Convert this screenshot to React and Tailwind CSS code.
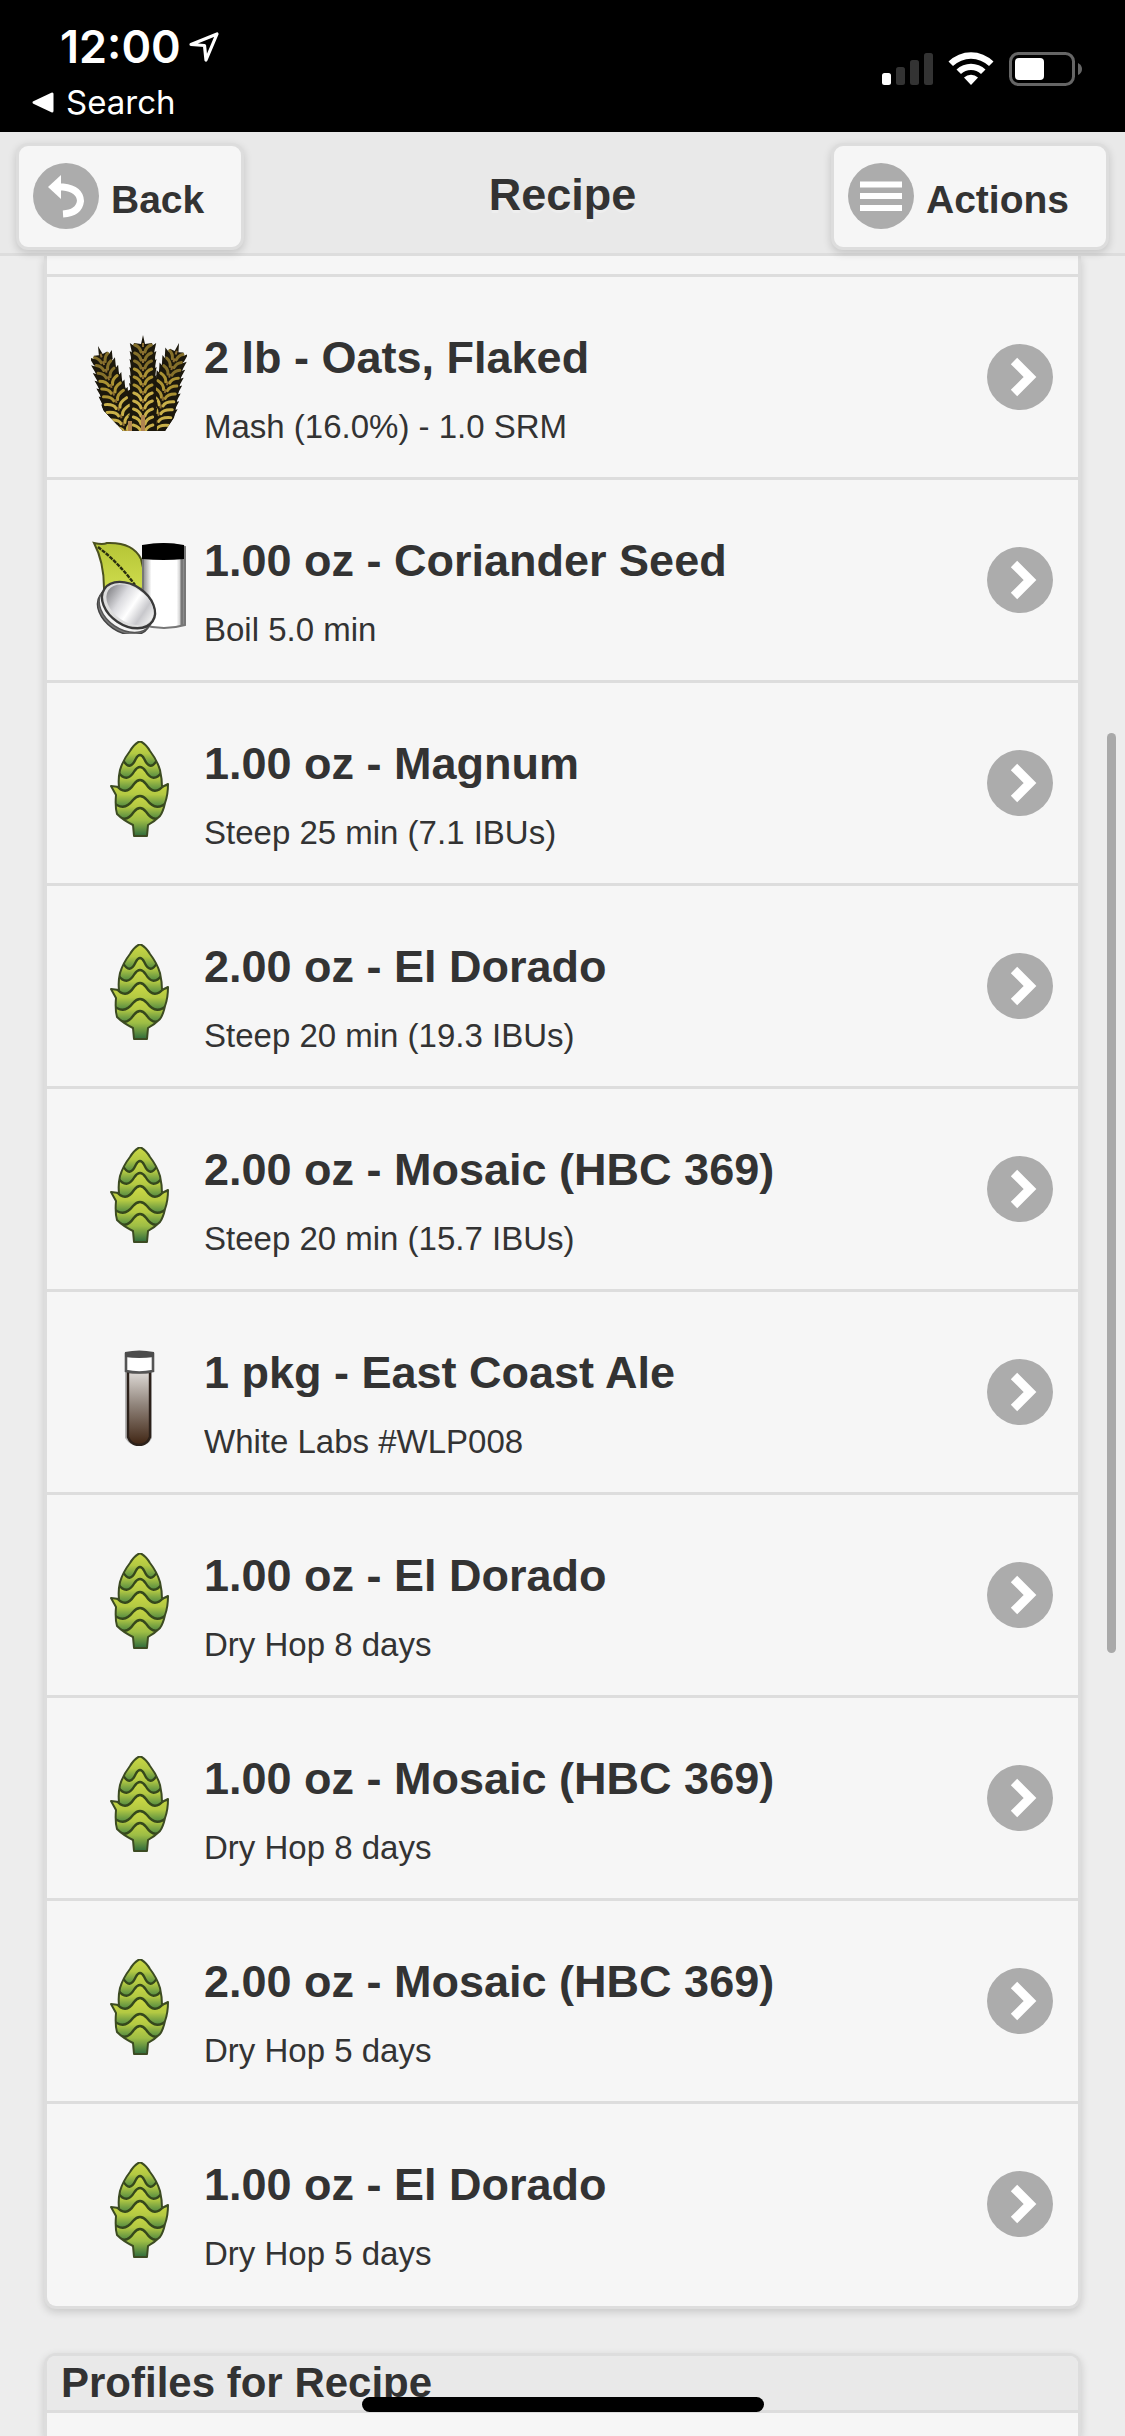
import React from "react";

const ingredients = [
  { icon: "grain", title: "2 lb - Oats, Flaked", detail: "Mash (16.0%) - 1.0 SRM" },
  { icon: "spice", title: "1.00 oz - Coriander Seed", detail: "Boil 5.0 min" },
  { icon: "hop", title: "1.00 oz - Magnum", detail: "Steep 25 min (7.1 IBUs)" },
  { icon: "hop", title: "2.00 oz - El Dorado", detail: "Steep 20 min (19.3 IBUs)" },
  { icon: "hop", title: "2.00 oz - Mosaic (HBC 369)", detail: "Steep 20 min (15.7 IBUs)" },
  { icon: "yeast", title: "1 pkg - East Coast Ale", detail: "White Labs #WLP008" },
  { icon: "hop", title: "1.00 oz - El Dorado", detail: "Dry Hop 8 days" },
  { icon: "hop", title: "1.00 oz - Mosaic (HBC 369)", detail: "Dry Hop 8 days" },
  { icon: "hop", title: "2.00 oz - Mosaic (HBC 369)", detail: "Dry Hop 5 days" },
  { icon: "hop", title: "1.00 oz - El Dorado", detail: "Dry Hop 5 days" },
];

function Ear({ x, y, angle, length, width, spread }) {
  const rows = [];
  for (let d = 10; d < length; d += 8) rows.push({ d, w: width + d * spread });
  const end = width + length * spread;
  return (
    <g transform={`translate(${x} ${y}) rotate(${angle})`}>
      <path d={`M0 0L2 9L${width - 3} 8L${width} 20L${end} ${length}H${-end}L${-width} 20L${-width + 3} 8L-2 9Z`} fill="#1c180c" />
      {rows.map(({ d, w }) => (
        <g key={d}>
          <path d={`M0 ${d + 7}L${-w - 1} ${d - 2}L${-w + 1} ${d + 7}ZM0 ${d + 7}L${w + 1} ${d - 2}L${w - 1} ${d + 7}Z`} fill="#1c180c" />
          <path
            d={`M-2 ${d + 7}Q-3 ${d + 2} ${-w + 4} ${d}M2 ${d + 7}Q3 ${d + 2} ${w - 4} ${d}`}
            stroke={d < 28 ? "#85702a" : d < 58 ? "#ab9233" : "#c9b049"}
            strokeWidth="3"
            strokeLinecap="round"
            fill="none"
          />
          <path d={`M0 ${d - 2}V${d + 2}`} stroke="#8d6f33" strokeWidth="2" />
        </g>
      ))}
    </g>
  );
}

function GrainIcon() {
  return (
    <svg viewBox="0 0 96 96" className="size-24" aria-hidden="true">
      <clipPath id="grain-base">
        <path d="M0 0H96V50L90 66L86 78L74 96H32L12 75L4 50L0 30Z" />
      </clipPath>
      <g clipPath="url(#grain-base)">
        <path d="M20 66L40 54L64 54L84 66L74 96H32Z" fill="#1c180c" />
        <Ear x={7} y={11} angle={-18} length={96} width={10} spread={0.09} />
        <Ear x={88} y={8} angle={16} length={98} width={10} spread={0.09} />
        <Ear x={52} y={0} angle={0} length={96} width={12} spread={0.02} />
        <path d="M52 80V96M39 86V96" stroke="#b08450" strokeWidth="4" />
      </g>
    </svg>
  );
}

function SpiceIcon() {
  return (
    <svg viewBox="0 0 96 96" className="size-24" aria-hidden="true">
      <defs>
        <linearGradient id="jar-glass">
          <stop offset="0" stopColor="#8a8a8a" />
          <stop offset=".2" stopColor="#fff" />
          <stop offset=".8" stopColor="#fff" />
          <stop offset="1" stopColor="#8c8c8c" />
        </linearGradient>
        <linearGradient id="lid-metal">
          <stop offset="0" stopColor="#8b8b8f" />
          <stop offset=".3" stopColor="#dadade" />
          <stop offset=".55" stopColor="#fff" />
          <stop offset=".8" stopColor="#c8c8cc" />
          <stop offset="1" stopColor="#eee" />
        </linearGradient>
        <linearGradient id="leaf-green" x2="0" y2="1">
          <stop offset="0" stopColor="#b5c536" />
          <stop offset="1" stopColor="#d0dd4e" />
        </linearGradient>
      </defs>
      <path d="M3 5Q12 7 16 5Q42 4 50 21Q55 38 51 54L13 50Q13 24 3 5Z" fill="url(#leaf-green)" stroke="#4b511f" strokeWidth="2" />
      <path d="M7 9Q28 25 44 47" stroke="#2b300f" strokeWidth="2.4" fill="none" strokeDasharray="4 1" />
      <path d="M52 9Q73 3 94 9V87Q73 93 52 87Z" fill="url(#jar-glass)" stroke="#777" strokeWidth="2" />
      <path d="M91 20V88" stroke="#777" strokeWidth="3" />
      <path d="M51 7Q73 3 93 7V21Q73 23 51 21Z" fill="#000" />
      <g transform="rotate(34 35 69)">
        <ellipse cx="36" cy="74" rx="29" ry="20" fill="#777" stroke="#444" strokeWidth="1.5" />
        <ellipse cx="36" cy="71" rx="29" ry="20" fill="#f4f4f4" stroke="#555" strokeWidth="1.5" />
        <ellipse cx="36" cy="66" rx="29" ry="20" fill="#ddd" stroke="#3a3a3a" strokeWidth="2.4" />
        <ellipse cx="37" cy="65" rx="26" ry="17" fill="url(#lid-metal)" />
      </g>
    </svg>
  );
}

const hopScales = [
  { peak: 67, half: 25 },
  { peak: 55, half: 28 },
  { peak: 39, half: 24 },
  { peak: 26, half: 22 },
  { peak: 14, half: 17 },
];

const hopOutline =
  "M49 0Q55 3 59 10Q66 19 69 29Q71 38 71 46L77 43Q77 54 74 62Q72 71 69 75Q64 80 57 84L56 95H43L42 84Q32 79 26 73Q24 66 25 54L20 45L28 46Q27 38 29 29Q32 19 39 10Q43 3 49 0Z";

function HopIcon() {
  return (
    <svg viewBox="0 0 96 96" className="size-24" aria-hidden="true">
      <defs>
        <linearGradient id="hop-stem" gradientUnits="userSpaceOnUse" x1="0" y1="66" x2="0" y2="95">
          <stop offset="0" stopColor="#c6d443" />
          <stop offset=".45" stopColor="#9dbd45" />
          <stop offset="1" stopColor="#2f6b3c" />
        </linearGradient>
        {hopScales.map(({ peak }) => (
          <linearGradient key={peak} id={`hop-${peak}`} gradientUnits="userSpaceOnUse" x1="0" y1={peak - 14} x2="0" y2={peak + 11}>
            <stop offset="0" stopColor="#ccd843" />
            <stop offset=".5" stopColor="#b3c943" />
            <stop offset="1" stopColor="#4f8842" />
          </linearGradient>
        ))}
        <clipPath id="hop-shape">
          <path d={hopOutline} />
        </clipPath>
      </defs>
      <path d={hopOutline} fill="url(#hop-stem)" />
      <g clipPath="url(#hop-shape)">
        {hopScales.map(({ peak: c, half: w }) => (
          <path
            key={c}
            d={`M0 -5V${c + 5}H${49 - w}Q${49 - w * 0.6} ${c + 17} ${49 - w * 0.25} ${c + 4}Q49 ${c - 4} ${49 + w * 0.25} ${c + 4}Q${49 + w * 0.6} ${c + 17} ${49 + w} ${c + 5}H100V-5Z`}
            fill={`url(#hop-${c})`}
            stroke="#35481c"
            strokeWidth="2.4"
          />
        ))}
      </g>
      <path d={hopOutline} fill="none" stroke="#3c4b22" strokeWidth="2" strokeLinejoin="round" />
    </svg>
  );
}

function YeastIcon() {
  return (
    <svg viewBox="0 0 96 96" className="size-24" aria-hidden="true">
      <defs>
        <linearGradient id="vial-fill" x2="0" y2="1">
          <stop offset="0" stopColor="#dedad6" />
          <stop offset=".45" stopColor="#90847b" />
          <stop offset="1" stopColor="#3f2412" />
        </linearGradient>
      </defs>
      <path d="M34 22H61V88Q57 96 48 96Q39 96 34 88Z" fill="#b5b5b5" />
      <path d="M37 22H59V87Q56 95 48 95Q40 95 37 87Z" fill="url(#vial-fill)" stroke="#2c211a" strokeWidth="2.4" />
      <path d="M35 4H62V21Q48 24 35 21Z" fill="#fff" stroke="#555" strokeWidth="2.6" />
      <path d="M34 2Q48 -1 63 2V7Q48 9 34 7Z" fill="#4c4c4c" />
    </svg>
  );
}

const icons = { grain: GrainIcon, spice: SpiceIcon, hop: HopIcon, yeast: YeastIcon };

function Disc({ children }) {
  return (
    <svg viewBox="0 0 66 66" className="size-[66px] shrink-0" aria-hidden="true">
      <circle cx="33" cy="33" r="33" fill="#acacac" />
      {children}
    </svg>
  );
}

function HeaderButton({ label, children }) {
  return (
    <button
      type="button"
      className="flex items-center gap-3 rounded-xl border-3 border-[#dddddd] bg-[#f6f6f6] pt-[17px] pr-[37px] pb-[18px] pl-[14px] text-[39px] leading-[58px] font-bold shadow-[0_3px_9px_rgba(0,0,0,0.16)]"
    >
      {children}
      <span className="pt-2">{label}</span>
    </button>
  );
}

function StatusBar() {
  return (
    <div className="flex h-[132px] shrink-0 justify-between bg-black pr-[43px] pl-8 font-['Inter',sans-serif] text-white">
      <div>
        <div className="flex items-center gap-2 pt-[17px] pl-7">
          <span className="text-[45px] leading-[60px] font-semibold">12:00</span>
          <svg viewBox="0 0 30 30" className="size-[30px]" aria-hidden="true">
            <path d="M2 12.5L28 2L17 28L15.5 13.5Z" fill="none" stroke="#fff" strokeWidth="3.2" strokeLinejoin="round" />
          </svg>
        </div>
        <a href="#search" className="flex items-center gap-3 text-[33px] leading-[50px]">
          <svg viewBox="0 0 22 21" className="h-[21px] w-[22px]" aria-hidden="true">
            <path d="M2 10.5L20 2V19Z" fill="#fff" stroke="#fff" strokeWidth="3" strokeLinejoin="round" />
          </svg>
          Search
        </a>
      </div>
      <div className="flex items-start gap-[15px] pt-[52px]">
        <svg viewBox="0 0 51 34" className="h-[34px] w-[51px]" aria-hidden="true">
          <rect x="0" y="21" width="9" height="12" rx="2.5" fill="#fff" />
          <rect x="14" y="15" width="9" height="18" rx="2.5" fill="#333" />
          <rect x="28" y="8" width="9" height="25" rx="2.5" fill="#333" />
          <rect x="42" y="1" width="9" height="32" rx="2.5" fill="#333" />
        </svg>
        <svg viewBox="0 0 46 34" className="h-[34px] w-[46px]" aria-hidden="true">
          <path d="M0.5 9.5A32 32 0 0 1 45.5 9.5L41 14A26 26 0 0 0 5 14Z" fill="#fff" />
          <path d="M8.5 17.5A21 21 0 0 1 37.5 17.5L33 22A14.5 14.5 0 0 0 13 22Z" fill="#fff" />
          <path d="M16 25.5A10.5 10.5 0 0 1 30 25.5L23 33Z" fill="#fff" />
        </svg>
        <svg viewBox="0 0 73 34" className="h-[34px] w-[73px]" aria-hidden="true">
          <rect x="1.5" y="1.5" width="63" height="31" rx="8" fill="none" stroke="#666" strokeWidth="3" />
          <rect x="6" y="6" width="29" height="22" rx="4" fill="#fff" />
          <path d="M69 11Q73 13 73 17Q73 21 69 23Z" fill="#666" />
        </svg>
      </div>
    </div>
  );
}

function IngredientRow({ icon, title, detail }) {
  const Icon = icons[icon];
  return (
    <li className="border-t-3 border-[#dddddd]">
      <a href="#ingredient" className="flex items-center pr-[25px] pl-11">
        <span className="pt-3">
          <Icon />
        </span>
        <span className="min-w-0 flex-1 pt-[51px] pb-7 pl-[17px]">
          <span className="block truncate text-[45px] leading-[60px] font-bold">{title}</span>
          <span className="mt-4 block truncate text-[33px] leading-[45px]">{detail}</span>
        </span>
        <Disc>
          <path d="M27 17L43 33L27 49" fill="none" stroke="#fff" strokeWidth="9" />
        </Disc>
      </a>
    </li>
  );
}

export default function App() {
  return (
    <div className="flex h-screen flex-col overflow-hidden bg-[#ededed] font-['Liberation_Sans',Arial,sans-serif] text-[#333333]">
      <StatusBar />
      <header className="z-10 grid shrink-0 grid-cols-[1fr_auto_1fr] items-start border-b-3 border-[#dddddd] bg-[#e9e9e9] px-4 pt-[11px]">
        <div className="flex h-[110px] items-start justify-start">
          <HeaderButton label="Back">
            <Disc>
              <path d="M15 24L28 12V36Z" fill="#fff" />
              <path d="M26 24H30Q47 26 47.5 38Q46 50 30 51" fill="none" stroke="#fff" strokeWidth="7" />
            </Disc>
          </HeaderButton>
        </div>
        <h1 className="pt-[22px] text-[45px] leading-[60px] font-bold [text-shadow:0_3px_0_#eeeeee]">Recipe</h1>
        <div className="flex items-start justify-end">
          <HeaderButton label="Actions">
            <Disc>
              <path d="M12 21.5H54M12 33H54M12 45H54" stroke="#fff" strokeWidth="6" />
            </Disc>
          </HeaderButton>
        </div>
      </header>
      <main className="flex min-h-0 flex-1 flex-col px-11">
        <ul className="shrink-0 rounded-b-xl border-x-3 border-b-3 border-[#dddddd] bg-[#f6f6f6] pt-[18px] pb-[2px] shadow-[0_3px_9px_rgba(0,0,0,0.16)]">
          {ingredients.map((item, i) => (
            <IngredientRow key={i} {...item} />
          ))}
        </ul>
        <section className="mt-11 flex flex-1 flex-col rounded-t-xl border-x-3 border-t-3 border-[#dddddd] bg-[#f6f6f6] shadow-[0_3px_9px_rgba(0,0,0,0.16)]">
          <h2 className="rounded-t-lg border-b-3 border-[#dddddd] bg-[#e9e9e9] px-[14px] text-[42px] leading-[54px] font-bold [text-shadow:0_3px_0_#eeeeee]">
            Profiles for Recipe
          </h2>
        </section>
      </main>
      <div className="fixed top-[733px] right-[9px] h-[920px] w-[9px] rounded-full bg-[#a9a9a9]" />
      <div className="fixed bottom-6 left-1/2 h-[15px] w-[402px] -translate-x-1/2 rounded-full bg-black" />
    </div>
  );
}
